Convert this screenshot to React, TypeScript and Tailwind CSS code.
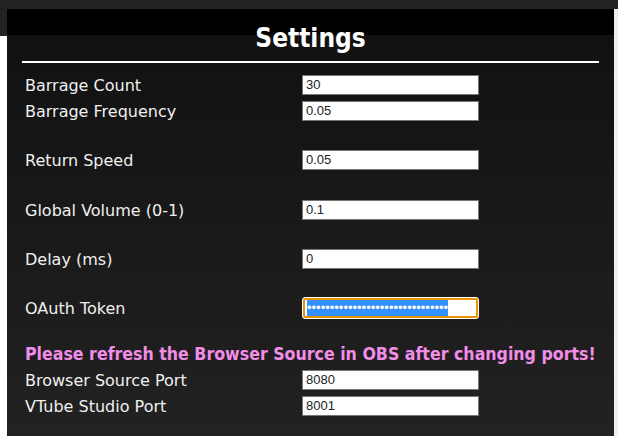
const fieldsTop = [
  { label: 'Barrage Count', value: '30' },
  { label: 'Barrage Frequency', value: '0.05' },
]

const ports = [
  { label: 'Browser Source Port', value: '8080' },
  { label: 'VTube Studio Port', value: '8001' },
]

function Row({ label, value }: { label: string; value: string }) {
  return (
    <div className="flex items-center h-[20px] mb-[6px]">
      <div className="w-[277px] mt-[2px] text-[16px] text-[#f0f0f0] leading-none font-['DejaVu_Sans',sans-serif]">{label}</div>
      <div className="w-[177px] h-[20px] bg-white border border-[#767676] flex items-center pl-[3px] text-[13px] text-[#222] font-['Liberation_Sans',Arial,sans-serif]">
        {value}
      </div>
    </div>
  )
}

function Spacer() {
  return <div className="h-[23px]" />
}

export default function App() {
  return (
    <div className="w-[618px] h-[436px] bg-white overflow-hidden font-['DejaVu_Sans_Condensed','DejaVu_Sans',sans-serif]">
      <div className="h-[36px] bg-[#222]" />
      <div className="flex -mt-[27px] h-[427px]">
        <div className="w-[7px]" />
        <div className="w-[607px] bg-[linear-gradient(to_bottom,#000_0px,#000_26px,#111_26px,#222_100%)]">
          <div className="mx-[15px] border-b-2 border-white pt-[12px] pb-[6px] text-center">
            <h1 className="text-[26px] font-bold text-white leading-[34px]">Settings</h1>
          </div>
          <div className="pl-[18px] pt-[12px]">
            {fieldsTop.map(f => (
              <Row key={f.label} label={f.label} value={f.value} />
            ))}
            <Spacer />
            <Row label="Return Speed" value="0.05" />
            <div className="h-[24px]" />
            <Row label="Global Volume (0-1)" value="0.1" />
            <Spacer />
            <Row label="Delay (ms)" value="0" />
            <Spacer />
            <div className="flex items-center h-[20px] mb-[6px]">
              <div className="w-[277px] mt-[2px] text-[16px] text-[#f0f0f0] leading-none font-['DejaVu_Sans',sans-serif]">OAuth Token</div>
              <div className="w-[177px] h-[22px] -my-[1px] rounded-[3px] border border-white bg-[#e69500] p-[2px]">
                <div className="h-full bg-white rounded-[1px] flex items-center pl-[2px]">
                  <span className="bg-[#3390ff] text-white text-[13px] leading-[16px] h-[16px] whitespace-nowrap font-['Liberation_Sans',Arial,sans-serif]">
                    {'•'.repeat(31)}
                  </span>
                </div>
              </div>
            </div>
            <div className="h-[20px]" />
            <p className="text-[17.6px] font-bold text-[#f28de8] leading-[20px] mb-[6px] whitespace-nowrap">
              Please refresh the Browser Source in OBS after changing ports!
            </p>
            {ports.map(f => (
              <Row key={f.label} label={f.label} value={f.value} />
            ))}
          </div>
        </div>
        <div className="w-[4px] bg-[#f0f0f0]" />
      </div>
    </div>
  )
}
